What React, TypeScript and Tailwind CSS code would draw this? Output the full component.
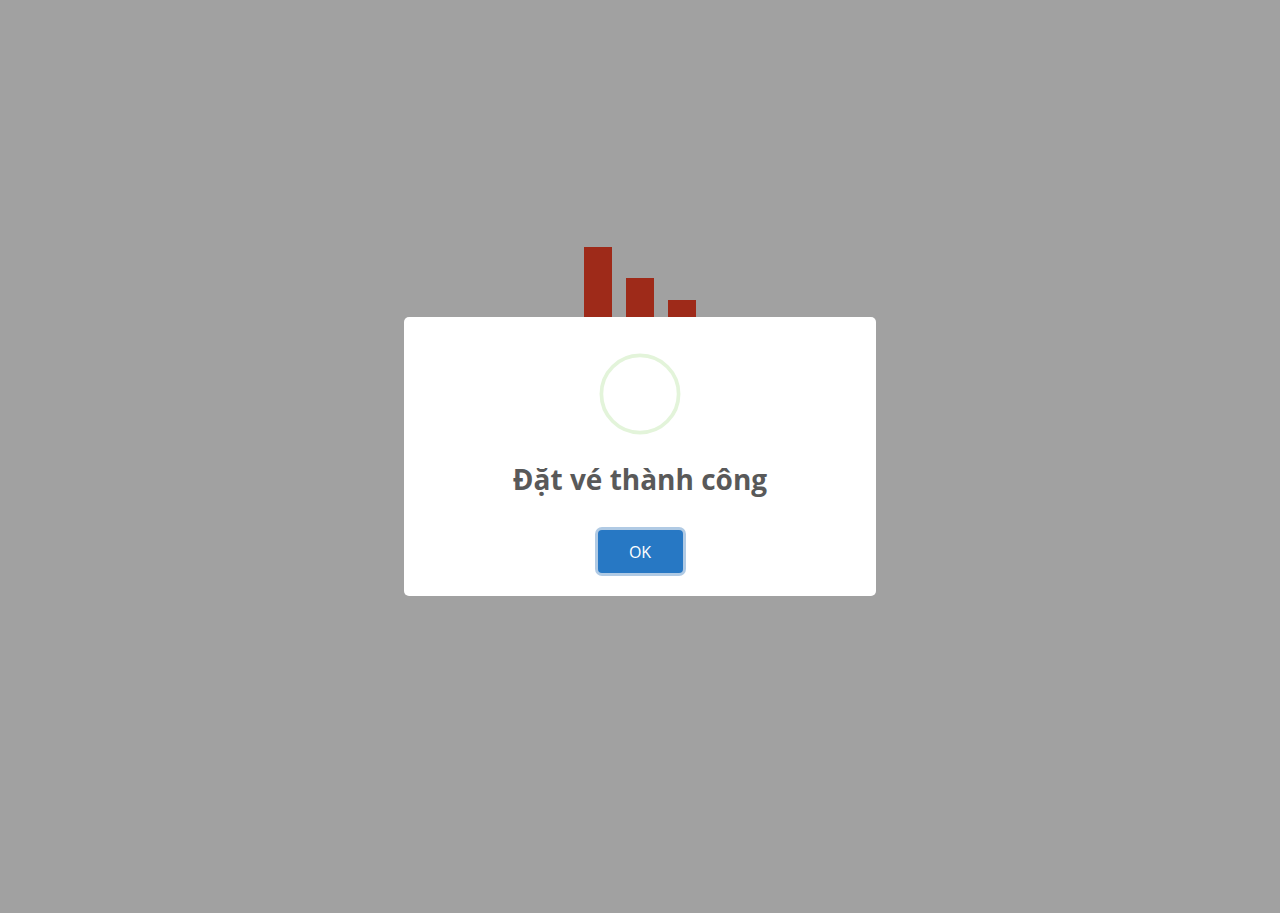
import React from "react";

const bars = [
  { id: "first", style: "h-[140px]" },
  { id: "second", style: "h-[78px]" },
  { id: "third", style: "h-[34px]" },
];

function LoadingBars() {
  return (
    <div className="flex h-[140px] items-center gap-3.5" aria-hidden="true">
      {bars.map((bar) => (
        <div key={bar.id} className={`w-7 bg-[#9e2a19] ${bar.style}`} />
      ))}
    </div>
  );
}

function SuccessDialog() {
  return (
    <div
      role="dialog"
      aria-modal="true"
      aria-labelledby="dialog-title"
      className="flex w-full max-w-[472px] flex-col items-center rounded-[5px] bg-white px-5 pt-9 pb-[23px]"
    >
      <svg className="size-[82px]" viewBox="0 0 82 82" fill="none" aria-hidden="true">
        <circle cx="41" cy="41" r="38.6" stroke="#e3f4da" strokeWidth="3.7" />
      </svg>
      <h2 id="dialog-title" className="mt-[23px] text-[28px] leading-[42px] font-bold text-[#595959]">
        Đặt vé thành công
      </h2>
      <button
        type="button"
        autoFocus
        className="mt-[30px] h-[43px] w-[85px] rounded bg-[#2778c4] text-base font-medium text-white ring-3 ring-[#b0cae4] outline-none"
      >
        OK
      </button>
    </div>
  );
}

export default function App() {
  return (
    <main className="relative min-h-screen bg-[#a1a1a1] font-['Open_Sans',sans-serif]">
      <div className="flex justify-center pt-[247px]">
        <LoadingBars />
      </div>
      <div className="fixed inset-0 flex items-center justify-center p-3">
        <SuccessDialog />
      </div>
    </main>
  );
}
